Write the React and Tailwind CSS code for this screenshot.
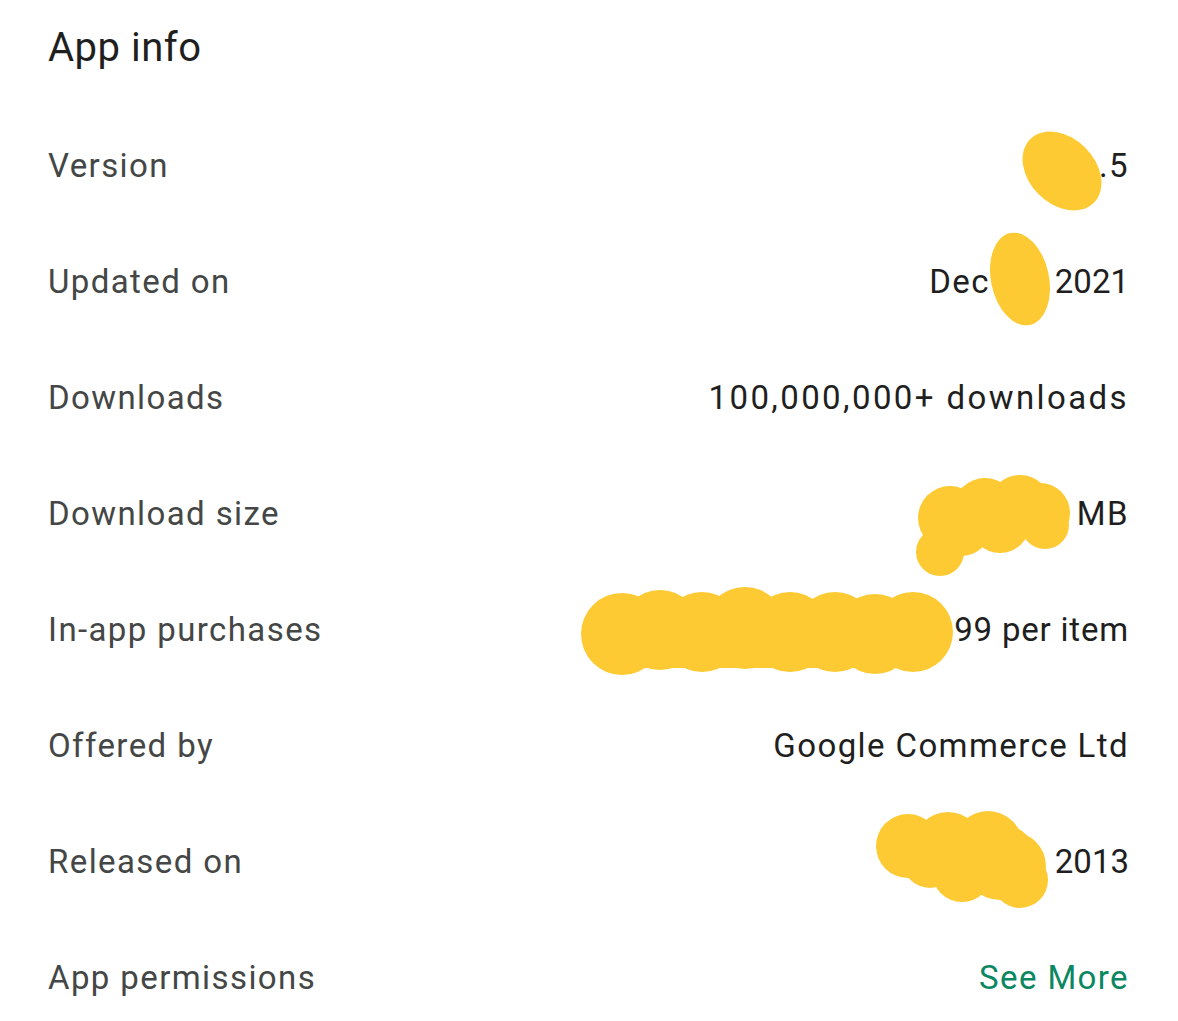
import React from "react";

function Scribbles() {
  const c = "#fdca33";
  const circles = [
    // Download size
    [950, 518, 32], [985, 510, 32], [1020, 506, 31], [1040, 513, 30], [940, 552, 24],
    [1000, 523, 30], [962, 528, 28], [1045, 525, 24],
    // In-app purchases
    [622, 634, 41], [660, 630, 40], [702, 632, 40], [745, 628, 41], [790, 632, 40],
    [835, 632, 40], [875, 634, 40], [913, 632, 40],
    // Released on
    [908, 846, 32], [948, 846, 34], [988, 846, 35], [1012, 866, 34], [962, 872, 30],
    [960, 856, 38], [1000, 862, 38], [930, 860, 28], [1020, 880, 28],
  ];
  return (
    <svg
      className="absolute left-0 top-0 pointer-events-none"
      width="1178"
      height="1021"
      viewBox="0 0 1178 1021"
    >
      <g fill={c}>
        <ellipse cx="1062" cy="171" rx="45" ry="33" transform="rotate(45 1062 171)" />
        <ellipse cx="1020" cy="279" rx="47" ry="29" transform="rotate(78 1020 279)" />
        <rect x="622" y="600" width="291" height="68" />
        {circles.map(([x, y, r], i) => (
          <circle key={i} cx={x} cy={y} r={r} />
        ))}
      </g>
    </svg>
  );
}

function Row({ label, children }) {
  return (
    <div className="h-[116px] flex items-center justify-between text-[33px] tracking-[1.4px]">
      <span className="text-[#444746]">{label}</span>
      {children}
    </div>
  );
}

export default function App() {
  return (
    <div
      className="relative w-[1178px] h-[1021px] overflow-hidden bg-white pl-[48px] pr-[49px]"
      style={{ fontFamily: "Roboto, 'Noto Sans', sans-serif" }}
    >
      <div className="mt-[24px] text-[40px] leading-[48px] tracking-[0.5px] text-[#1f1f1f]">App info</div>
      <div className="mt-[36px] flex flex-col">
        <Row label="Version">
          <span className="text-[#1f1f1f]">.5</span>
        </Row>
        <Row label="Updated on">
          <span className="text-[#1f1f1f] flex items-center">
            <span>Dec</span>
            <span className="inline-block w-[65px]" />
            <span className="tracking-normal">2021</span>
          </span>
        </Row>
        <Row label="Downloads">
          <span className="text-[#1f1f1f] tracking-[2.4px]">100,000,000+ downloads</span>
        </Row>
        <Row label="Download size">
          <span className="text-[#1f1f1f]">MB</span>
        </Row>
        <Row label="In-app purchases">
          <span className="text-[#1f1f1f] tracking-[0.8px]">99 per item</span>
        </Row>
        <Row label="Offered by">
          <span className="text-[#1f1f1f]">Google Commerce Ltd</span>
        </Row>
        <Row label="Released on">
          <span className="text-[#1f1f1f] tracking-normal">2013</span>
        </Row>
        <Row label="App permissions">
          <span className="text-[#0b8762]">See More</span>
        </Row>
      </div>
      <Scribbles />
    </div>
  );
}
